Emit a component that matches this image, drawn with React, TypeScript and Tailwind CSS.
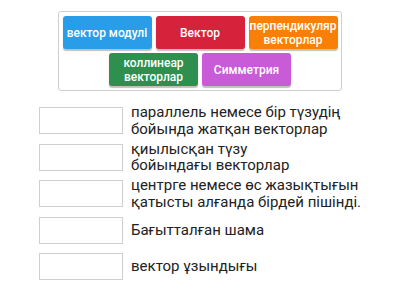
const tiles = [
  { label: "вектор модулі", color: "bg-[#2a9de8]" },
  { label: "Вектор", color: "bg-[#d7223b]" },
  { label: "перпендикуляр векторлар", color: "bg-[#f97f06]" },
  { label: "коллинеар векторлар", color: "bg-[#2e8f4e]" },
  { label: "Симметрия", color: "bg-[#c95ad8]" },
];

const rows = [
  ["параллель немесе бір түзудің", "бойында жатқан векторлар"],
  ["қиылысқан түзу", "бойындағы векторлар"],
  ["центрге немесе өс жазықтығын", "қатысты алғанда бірдей пішінді."],
  ["Бағытталған шама"],
  ["вектор ұзындығы"],
];

export default function App() {
  return (
    <div className="w-[400px] h-[300px] bg-white overflow-hidden font-['Roboto',sans-serif]">
      <div className="flex justify-center pt-[11px]">
        <div className="w-[284px] border border-[#cfcfcf] rounded-[3px] px-[3px] py-[4px] flex flex-wrap justify-center gap-[4px]">
          {tiles.map((t) => (
            <div
              key={t.label}
              className={`${t.color} w-[89px] h-[33px] rounded-[3px] shadow-[0_2px_1px_rgba(0,0,0,0.25)] flex items-center justify-center text-center text-white text-[12px] leading-[14px] font-medium px-[2px]`}
            >
              {t.label}
            </div>
          ))}
        </div>
      </div>
      <div className="pl-[39px] pt-[16px] flex flex-col gap-[9.5px]">
        {rows.map((r) => (
          <div key={r[0]} className="flex items-center h-[27px]">
            <div className="w-[84px] h-[27px] border border-[#cfcfcf] bg-white shrink-0" />
            <div className="ml-[8px] text-[15px] leading-[16.5px] text-[#222] whitespace-nowrap">
              {r.map((line) => (
                <div key={line}>{line}</div>
              ))}
            </div>
          </div>
        ))}
      </div>
    </div>
  );
}
